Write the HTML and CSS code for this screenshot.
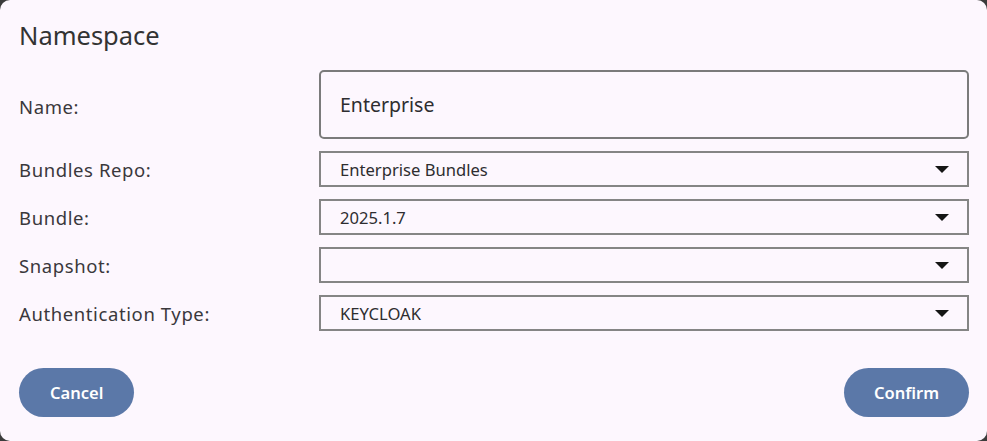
FILE: index.html
```html
<!DOCTYPE html>
<html>
<head>
<meta charset="utf-8">
<link rel="stylesheet" href="styles.css">
</head>
<body>
<div class="dialog">
  <h1 class="title">Namespace</h1>
  <div class="form">
    <div class="row row-name">
      <div class="label">Name:</div>
      <div class="textfield">Enterprise</div>
    </div>
    <div class="row">
      <div class="label">Bundles Repo:</div>
      <div class="select"><span class="value">Enterprise Bundles</span><span class="arrow"></span></div>
    </div>
    <div class="row">
      <div class="label">Bundle:</div>
      <div class="select"><span class="value">2025.1.7</span><span class="arrow"></span></div>
    </div>
    <div class="row">
      <div class="label">Snapshot:</div>
      <div class="select"><span class="value"></span><span class="arrow"></span></div>
    </div>
    <div class="row">
      <div class="label">Authentication Type:</div>
      <div class="select"><span class="value">KEYCLOAK</span><span class="arrow"></span></div>
    </div>
  </div>
  <div class="actions">
    <button class="btn">Cancel</button>
    <button class="btn btn-confirm">Confirm</button>
  </div>
</div>
</body>
</html>
```

FILE: styles.css
```css
html, body {
  margin: 0;
  padding: 0;
  height: 100%;
}
body {
  background: #3b3b3b;
  font-family: "Noto Sans", "Open Sans", sans-serif;
  color: #363338;
}
.dialog {
  box-sizing: border-box;
  height: 441px;
  width: 987px;
  background: #fdf7fe;
  border-radius: 10px;
  padding: 17px 18px 0 19px;
  display: flex;
  flex-direction: column;
}
.title {
  margin: 0;
  font-weight: 400;
  font-size: 25.5px;
  line-height: 36px;
  color: #333;
}
.form {
  margin-top: 17px;
  display: flex;
  flex-direction: column;
  gap: 12px;
}
.row {
  display: flex;
  align-items: center;
}
.label {
  width: 300px;
  font-size: 18.5px;
  letter-spacing: 0.6px;
  color: #3a383c;
}
.row-name .label {
  padding-top: 3px;
}
.textfield {
  box-sizing: border-box;
  flex: 1;
  height: 69px;
  border: 2px solid #7b7b7b;
  border-radius: 5px;
  padding: 0 19px;
  display: flex;
  align-items: center;
  font-size: 19.5px;
  color: #2e2d30;
}
.select {
  box-sizing: border-box;
  flex: 1;
  height: 36px;
  border: 2px solid #858585;
  padding: 0 18px 0 19px;
  display: flex;
  align-items: center;
  justify-content: space-between;
  font-size: 16.6px;
  color: #2e2d30;
}
.arrow {
  width: 0;
  height: 0;
  border-left: 7px solid transparent;
  border-right: 7px solid transparent;
  border-top: 7px solid #151515;
}
.actions {
  margin-top: 37px;
  display: flex;
  justify-content: space-between;
}
.btn {
  height: 49px;
  padding: 0 31px;
  border: none;
  border-radius: 25px;
  background: #5b78a8;
  color: #fff;
  font-family: "Noto Sans", "Open Sans", sans-serif;
  font-weight: 600;
  font-size: 16.5px;
}
.btn-confirm {
  padding: 0 30px;
}
```
